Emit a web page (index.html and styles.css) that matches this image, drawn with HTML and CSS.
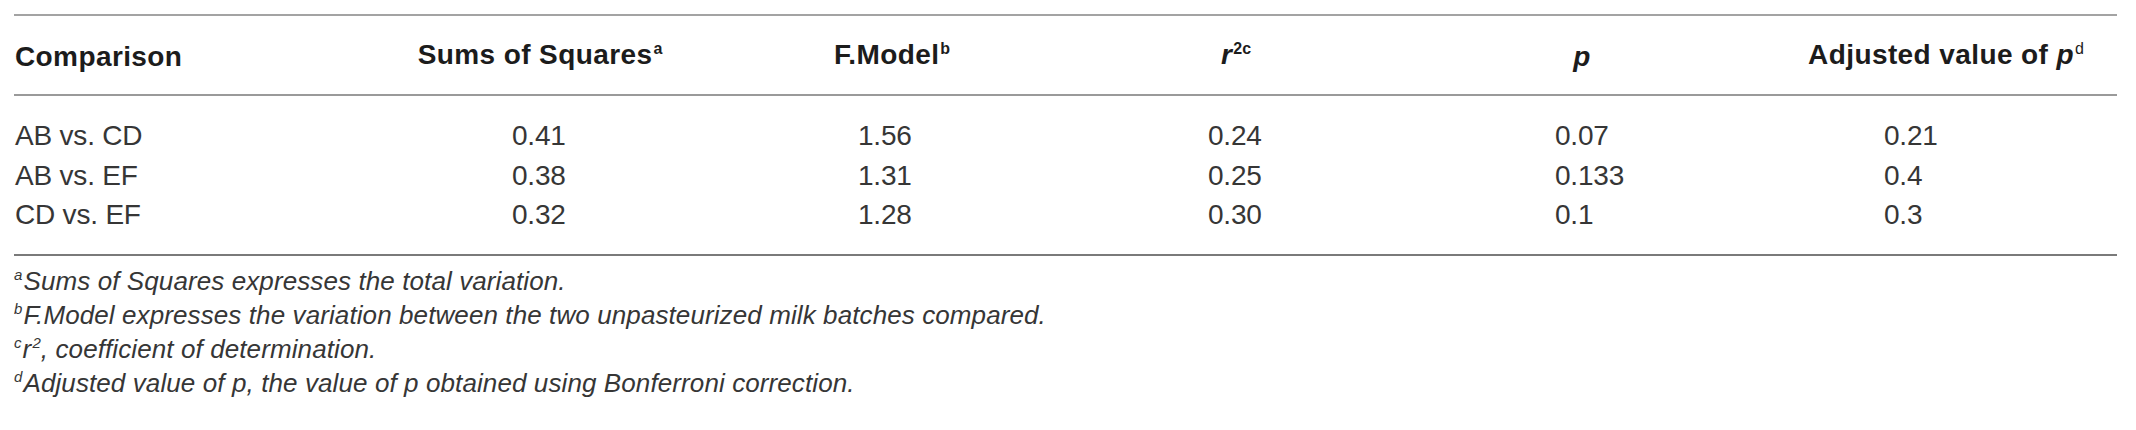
FILE: index.html
```html
<!DOCTYPE html>
<html lang="en">
<head>
<meta charset="utf-8">
<title>PERMANOVA pairwise comparisons</title>
<link rel="stylesheet" href="styles.css">
</head>
<body>
<div class="table-wrap">
  <div class="grid head">
    <div class="cell first">Comparison</div>
    <div class="cell">Sums of Squares<sup>a</sup></div>
    <div class="cell">F.Model<sup>b</sup></div>
    <div class="cell"><i>r</i><sup>2c</sup></div>
    <div class="cell"><i>p</i></div>
    <div class="cell last">Adjusted value of <i>p</i><sup class="light">d</sup></div>
  </div>
  <div class="grid body">
    <div class="cell first">AB vs. CD</div>
    <div class="cell v2">0.41</div>
    <div class="cell v3">1.56</div>
    <div class="cell v4">0.24</div>
    <div class="cell v5">0.07</div>
    <div class="cell v6">0.21</div>

    <div class="cell first">AB vs. EF</div>
    <div class="cell v2">0.38</div>
    <div class="cell v3">1.31</div>
    <div class="cell v4">0.25</div>
    <div class="cell v5">0.133</div>
    <div class="cell v6">0.4</div>

    <div class="cell first">CD vs. EF</div>
    <div class="cell v2">0.32</div>
    <div class="cell v3">1.28</div>
    <div class="cell v4">0.30</div>
    <div class="cell v5">0.1</div>
    <div class="cell v6">0.3</div>
  </div>
  <div class="notes">
    <p><sup>a</sup>Sums of Squares expresses the total variation.</p>
    <p><sup>b</sup>F.Model expresses the variation between the two unpasteurized milk batches compared.</p>
    <p><sup>c</sup>r<sup class="sq">2</sup>, coefficient of determination.</p>
    <p><sup>d</sup>Adjusted value of p, the value of p obtained using Bonferroni correction.</p>
  </div>
</div>
</body>
</html>
```
FILE: styles.css
```css
html, body {
  margin: 0;
  padding: 0;
  background: #ffffff;
}
body {
  font-family: "Liberation Sans", Arial, Helvetica, sans-serif;
  color: #363636;
}
.table-wrap {
  margin: 14px 0 0 14px;
  width: 2103px;
}
.grid {
  display: grid;
  grid-template-columns: 350px 352px 352px 336px 356px 357px;
}
.head {
  border-top: 2px solid #a3a3a3;
  border-bottom: 2px solid #9a9a9a;
  height: 78px;
  align-items: center;
  font-weight: bold;
  font-size: 28px;
  letter-spacing: 0.4px;
  color: #1c1c1c;
}
.head .cell {
  text-align: center;
  line-height: 78px;
  white-space: nowrap;
}
.head .cell.first {
  text-align: left;
  padding-left: 1px;
}
.head .cell.last {
  padding-left: 15px;
}
.head sup {
  font-size: 16px;
  font-weight: bold;
  letter-spacing: 0;
  vertical-align: 0;
  position: relative;
  top: -10px;
  margin-left: 1px;
}
.head sup.light {
  font-weight: normal;
}
.head i {
  font-style: italic;
}
.body {
  padding: 20px 0 19px;
  border-bottom: 2px solid #7a7a7a;
  font-size: 28px;
  line-height: 39.5px;
  letter-spacing: -0.2px;
}
.body .cell.first {
  padding-left: 1px;
}
.v2 { padding-left: 148px; }
.v3 { padding-left: 142px; }
.v4 { padding-left: 140px; }
.v5 { padding-left: 151px; }
.v6 { padding-left: 124px; }
.notes {
  padding-top: 10px;
  font-style: italic;
  font-size: 26px;
  line-height: 31px;
  letter-spacing: 0.1px;
}
.notes p {
  margin: 0;
  white-space: nowrap;
}
.notes sup {
  font-size: 15px;
  vertical-align: 0;
  position: relative;
  top: -10px;
  margin-right: 1px;
}
.notes sup.sq {
  margin-right: 0;
  margin-left: 1px;
}
```
